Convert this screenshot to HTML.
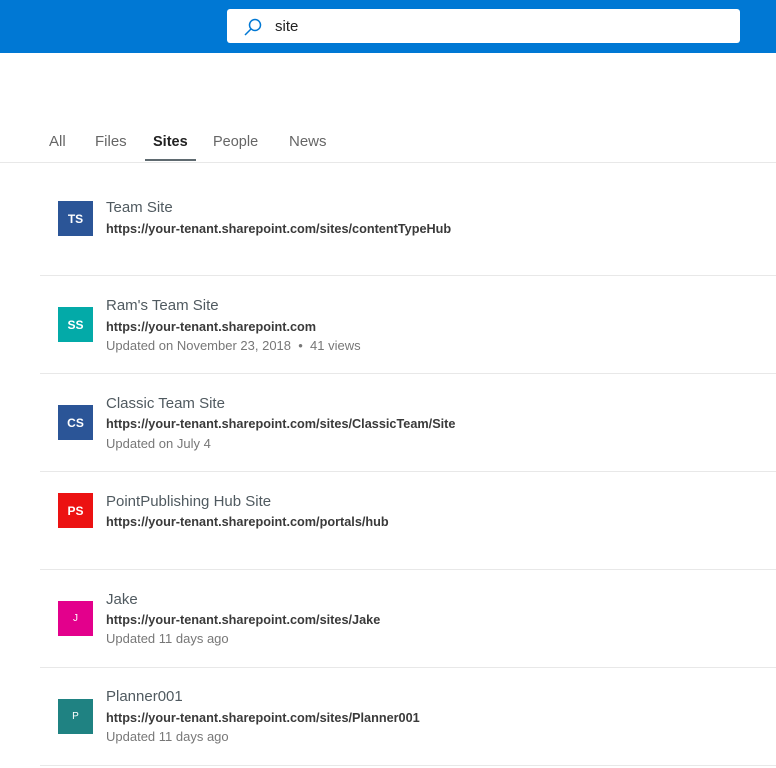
<!DOCTYPE html>
<html><head><meta charset="utf-8"><style>
*{margin:0;padding:0;box-sizing:border-box}
body{width:776px;height:768px;background:#fff;font-family:"Liberation Sans",sans-serif;position:relative;overflow:hidden}
.hdr{position:absolute;left:0;top:0;width:776px;height:53px;background:#0078d4}
.sb{position:absolute;left:227px;top:9px;width:513px;height:34px;background:#fff;border-radius:3px}
.sb span{position:absolute;left:48px;top:9px;font-size:15px;color:#222}
.tab{position:absolute;top:133px;font-size:15px;color:#666;line-height:17px}
.ul{position:absolute;left:145px;top:159px;width:51px;height:2px;background:#5f6a70}
.hl{position:absolute;height:1px;background:#e8e8e8}
.av{position:absolute;left:58px;width:35px;height:35px;color:#fff;font-size:12px;font-weight:bold;display:flex;align-items:center;justify-content:center}
.t{position:absolute;left:106px;font-size:15px;color:#505a60;line-height:18px}
.u{position:absolute;left:106px;font-size:12.7px;font-weight:bold;color:#3a3a3a;line-height:16px}
.m{position:absolute;left:106px;font-size:13px;color:#777;line-height:16px}
</style></head><body>
<div class="hdr"><div class="sb">
<svg style="position:absolute;left:16px;top:8px" width="20" height="20" viewBox="0 0 20 20"><circle cx="12" cy="8" r="5.5" fill="none" stroke="#0078d4" stroke-width="1.5"/><line x1="8" y1="12" x2="2" y2="18" stroke="#0078d4" stroke-width="1.5"/></svg>
<span>site</span></div></div>
<div class="tab" style="left:49px">All</div>
<div class="tab" style="left:95px">Files</div>
<div class="tab" style="left:153px;top:134px;color:#222;font-weight:bold;font-size:14.5px">Sites</div>
<div class="tab" style="left:213px;top:134px;font-size:14.5px">People</div>
<div class="tab" style="left:289px">News</div>
<div class="ul"></div>
<div class="hl" style="left:0;top:162px;width:776px"></div>

<div class="av" style="top:201px;background:#2b5597">TS</div>
<div class="t" style="top:199px">Team Site</div>
<div class="u" style="top:221px">https://your-tenant.sharepoint.com/sites/contentTypeHub</div>
<div class="hl" style="left:40px;top:275px;width:736px"></div>

<div class="av" style="top:307px;background:#03aaa8">SS</div>
<div class="t" style="top:297px">Ram's Team Site</div>
<div class="u" style="top:319px">https://your-tenant.sharepoint.com</div>
<div class="m" style="top:338px">Updated on November 23, 2018 &nbsp;•&nbsp; 41 views</div>
<div class="hl" style="left:40px;top:373px;width:736px"></div>

<div class="av" style="top:405px;background:#2b5597">CS</div>
<div class="t" style="top:395px">Classic Team Site</div>
<div class="u" style="top:416px">https://your-tenant.sharepoint.com/sites/ClassicTeam/Site</div>
<div class="m" style="top:436px">Updated on July 4</div>
<div class="hl" style="left:40px;top:471px;width:736px"></div>

<div class="av" style="top:493px;background:#ec1212">PS</div>
<div class="t" style="top:493px">PointPublishing Hub Site</div>
<div class="u" style="top:514px">https://your-tenant.sharepoint.com/portals/hub</div>
<div class="hl" style="left:40px;top:569px;width:736px"></div>

<div class="av" style="top:601px;background:#e3008c;font-weight:normal;font-size:10px">J</div>
<div class="t" style="top:591px">Jake</div>
<div class="u" style="top:612px">https://your-tenant.sharepoint.com/sites/Jake</div>
<div class="m" style="top:631px">Updated 11 days ago</div>
<div class="hl" style="left:40px;top:667px;width:736px"></div>

<div class="av" style="top:699px;background:#1f8282;font-weight:normal;font-size:10px">P</div>
<div class="t" style="top:688px">Planner001</div>
<div class="u" style="top:710px">https://your-tenant.sharepoint.com/sites/Planner001</div>
<div class="m" style="top:729px">Updated 11 days ago</div>
<div class="hl" style="left:40px;top:765px;width:736px"></div>
</body></html>
